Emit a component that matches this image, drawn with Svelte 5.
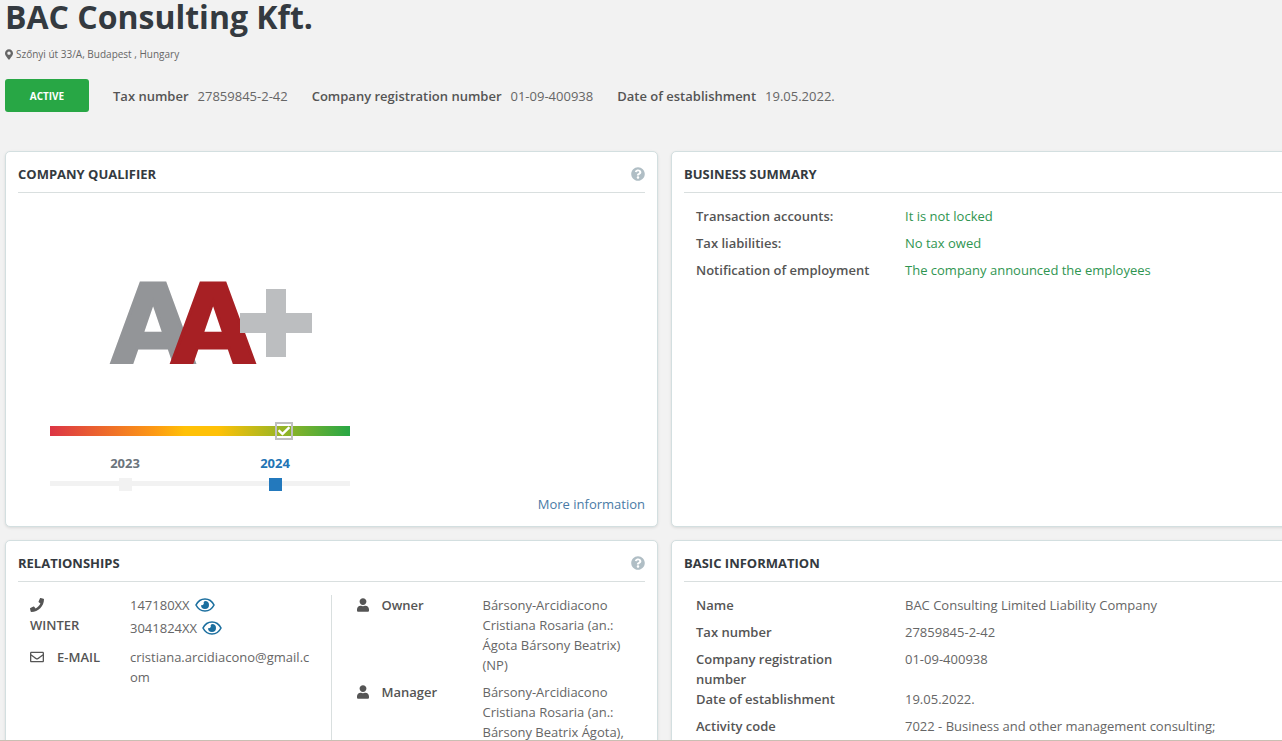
<script lang="ts">
	const company = {
		name: 'BAC Consulting Kft.',
		address: 'Szőnyi út 33/A, Budapest , Hungary',
		status: 'ACTIVE'
	};

	const facts = [
		{ label: 'Tax number', value: '27859845-2-42' },
		{ label: 'Company registration number', value: '01-09-400938' },
		{ label: 'Date of establishment', value: '19.05.2022.' }
	];

	const summary = [
		{ label: 'Transaction accounts:', value: 'It is not locked' },
		{ label: 'Tax liabilities:', value: 'No tax owed' },
		{ label: 'Notification of employment', value: 'The company announced the employees' }
	];

	const basics = [
		{ label: 'Name', value: 'BAC Consulting Limited Liability Company' },
		{ label: 'Tax number', value: '27859845-2-42' },
		{ label: 'Company registration number', value: '01-09-400938' },
		{ label: 'Date of establishment', value: '19.05.2022.' },
		{ label: 'Activity code', value: '7022 - Business and other management consulting;' }
	];

	const phones = ['147180XX', '3041824XX'];

	const people = [
		{ role: 'Owner', name: 'Bársony-Arcidiacono Cristiana Rosaria (an.: Ágota Bársony Beatrix) (NP)' },
		{ role: 'Manager', name: 'Bársony-Arcidiacono Cristiana Rosaria (an.: Bársony Beatrix Ágota),' }
	];

	const years = [2023, 2024];
	let activeYear = $state(2024);
	let score = 78;
</script>

{#snippet help()}
	<button class="help" aria-label="Help">
		<svg width="14" height="14" viewBox="0 0 512 512">
			<path
				fill="currentColor"
				d="M504 256c0 136.997-111.043 248-248 248S8 392.997 8 256C8 119.083 119.043 8 256 8s248 111.083 248 248zM262.655 90c-54.497 0-89.255 22.957-116.549 63.758-3.536 5.286-2.353 12.415 2.715 16.258l34.699 26.31c5.205 3.947 12.621 3.008 16.665-2.122 17.864-22.658 30.113-35.797 57.303-35.797 20.429 0 45.698 13.148 45.698 32.958 0 14.976-12.363 22.667-32.534 33.976C247.128 238.528 216 254.941 216 296v4c0 6.627 5.373 12 12 12h56c6.627 0 12-5.373 12-12v-1.333c0-28.462 83.186-29.647 83.186-106.667 0-58.002-60.165-102-116.531-102zM256 338c-25.365 0-46 20.635-46 46 0 25.364 20.635 46 46 46s46-20.636 46-46c0-25.365-20.635-46-46-46z"
			/>
		</svg>
	</button>
{/snippet}

<div class="page">
	<header>
		<h1>{company.name}</h1>
		<p class="address">
			<svg width="8" height="11" viewBox="0 0 384 512">
				<path
					fill="currentColor"
					d="M172.268 501.67C26.97 291.031 0 269.413 0 192 0 85.961 85.961 0 192 0s192 85.961 192 192c0 77.413-26.97 99.031-172.268 309.67-9.535 13.774-29.93 13.773-39.464 0zM192 272c44.183 0 80-35.817 80-80s-35.817-80-80-80-80 35.817-80 80 35.817 80 80 80z"
				/>
			</svg>
			{company.address}
		</p>
		<div class="facts">
			<button class="status">{company.status}</button>
			{#each facts as fact}
				<p class="fact"><strong>{fact.label}</strong><span>{fact.value}</span></p>
			{/each}
		</div>
	</header>

	<main>
		<section class="card qualifier">
			<div class="card-head">
				<h2>COMPANY QUALIFIER</h2>
				{@render help()}
			</div>
			<div class="rating">
				<svg class="grade" width="300" height="130" viewBox="0 -30 300 130" role="img" aria-label="AA+">
					<text class="grade-back" x="103" y="79" text-anchor="middle">A</text>
					<text class="grade-front" x="163" y="79" text-anchor="middle">A</text>
					<rect x="216" y="6" width="20" height="68" fill="#bcbec0" />
					<rect x="190" y="30" width="72" height="20" fill="#bcbec0" />
				</svg>
				<div class="scale">
					<span class="marker" style="left: {score}%">
						<svg width="12" height="12" viewBox="0 0 512 512">
							<path
								fill="#fff"
								d="M173.898 439.404l-166.4-166.4c-9.997-9.997-9.997-26.206 0-36.204l36.203-36.204c9.997-9.998 26.207-9.998 36.204 0L192 312.69 432.095 72.596c9.997-9.997 26.207-9.997 36.204 0l36.203 36.204c9.997 9.997 9.997 26.206 0 36.204l-294.4 294.401c-9.998 9.997-26.207 9.997-36.204-.001z"
							/>
						</svg>
					</span>
				</div>
				<div class="timeline">
					{#each years as year}
						<button class="year" class:active={year === activeYear} onclick={() => (activeYear = year)}>
							{year}
							<span class="dot"></span>
						</button>
					{/each}
				</div>
			</div>
			<a class="more" href="#more">More information</a>
		</section>

		<section class="card">
			<div class="card-head">
				<h2>BUSINESS SUMMARY</h2>
			</div>
			<dl class="rows good">
				{#each summary as row}
					<div class="row"><dt>{row.label}</dt><dd>{row.value}</dd></div>
				{/each}
			</dl>
		</section>

		<section class="card">
			<div class="card-head">
				<h2>RELATIONSHIPS</h2>
				{@render help()}
			</div>
			<div class="relations">
				<dl class="contacts">
					<div class="contact">
						<dt>
							<svg width="14" height="14" viewBox="0 0 512 512">
								<path
									fill="currentColor"
									d="M493.4 24.6l-104-24c-11.3-2.6-22.9 3.3-27.5 13.9l-48 112c-4.2 9.8-1.4 21.3 6.9 28l60.6 49.6c-36 76.7-98.9 140.5-177.2 177.2l-49.6-60.6c-6.8-8.3-18.2-11.1-28-6.9l-112 48C3.9 366.5-2 378.1.6 389.4l24 104C27.1 504.2 36.7 512 48 512c256.1 0 464-207.5 464-464 0-11.2-7.7-20.9-18.6-23.4z"
								/>
							</svg>
							<span>WINTER</span>
						</dt>
						<dd>
							{#each phones as phone}
								<span class="phone">
									{phone}
									<button class="reveal" aria-label="Show number">
										<svg width="20" height="14" viewBox="0 0 20 14">
											<path
												d="M1 7C5 -1 15 -1 19 7C15 15 5 15 1 7Z"
												fill="none"
												stroke="currentColor"
												stroke-width="1.6"
											/>
											<path d="M10 3a4 4 0 1 1-4 4c1.5.8 3.6-.6 2.6-2.4C9 3.8 9.4 3.2 10 3Z" fill="currentColor" />
										</svg>
									</button>
								</span>
							{/each}
						</dd>
					</div>
					<div class="contact">
						<dt>
							<svg width="14" height="14" viewBox="0 0 512 512">
								<path
									fill="currentColor"
									d="M464 64H48C21.49 64 0 85.49 0 112v288c0 26.51 21.49 48 48 48h416c26.51 0 48-21.49 48-48V112c0-26.51-21.49-48-48-48zm0 48v40.805c-22.422 18.259-58.168 46.651-134.587 106.49-16.841 13.247-50.201 45.072-73.413 44.701-23.208.375-56.579-31.459-73.413-44.701C106.18 199.465 70.425 171.067 48 152.805V112h416zM48 400V214.398c22.914 18.251 55.409 43.862 104.938 82.646 21.857 17.205 60.134 55.186 103.062 54.955 42.717.231 80.509-37.199 103.053-54.947 49.528-38.783 82.032-64.401 104.947-82.653V400H48z"
								/>
							</svg>
							<span>E-MAIL</span>
						</dt>
						<dd class="email">cristiana.arcidiacono@gmail.com</dd>
					</div>
				</dl>
				<dl class="people">
					{#each people as person}
						<div class="person">
							<dt>
								<svg width="12" height="14" viewBox="0 0 448 512">
									<path
										fill="currentColor"
										d="M224 256c70.7 0 128-57.3 128-128S294.7 0 224 0 96 57.3 96 128s57.3 128 128 128zm89.6 32h-16.7c-22.2 10.2-46.9 16-72.9 16s-50.6-5.8-72.9-16h-16.7C60.2 288 0 348.2 0 422.4V464c0 26.5 21.5 48 48 48h352c26.5 0 48-21.5 48-48v-41.6c0-74.2-60.2-134.4-134.4-134.4z"
									/>
								</svg>
								{person.role}
							</dt>
							<dd>{person.name}</dd>
						</div>
					{/each}
				</dl>
			</div>
		</section>

		<section class="card">
			<div class="card-head">
				<h2>BASIC INFORMATION</h2>
			</div>
			<dl class="rows">
				{#each basics as row}
					<div class="row"><dt>{row.label}</dt><dd>{row.value}</dd></div>
				{/each}
			</dl>
		</section>
	</main>
</div>

<style>
	:global(body) {
		background: #f2f2f2;
	}

	.page {
		box-sizing: border-box;
		height: 100vh;
		padding-left: 5px;
		overflow: hidden;
		border-bottom: 1px solid #c9bfb3;
		font-family: 'Open Sans', 'Noto Sans', sans-serif;
		font-size: 13px;
		line-height: 20px;
		color: #666;
	}
	h1,
	h2,
	p,
	dl,
	dd {
		margin: 0;
	}
	button {
		padding: 0;
		border: 0;
		background: none;
		font: inherit;
		color: inherit;
		cursor: pointer;
	}
	svg {
		display: block;
		flex-shrink: 0;
	}
	strong,
	dt {
		font-weight: 600;
		color: #555;
	}

	/* Company header */
	h1 {
		font-size: 32px;
		line-height: 34px;
		font-weight: 700;
		color: #343a40;
	}
	.address {
		display: flex;
		align-items: center;
		gap: 3px;
		margin-top: 10px;
		font-size: 10px;
	}
	.facts {
		display: flex;
		align-items: center;
		gap: 24px;
		margin-top: 15px;
	}
	.status {
		width: 84px;
		height: 33px;
		border-radius: 3px;
		background: #28a745;
		color: #fff;
		font-size: 10px;
		font-weight: 700;
	}
	.fact {
		display: flex;
		gap: 9px;
	}

	/* Cards */
	main {
		display: grid;
		grid-template-columns: 1fr 1fr;
		gap: 13px;
		margin: 39px -42px 0 0;
	}
	.card {
		box-sizing: border-box;
		padding: 12px;
		border: 1px solid #d3dfe0;
		border-radius: 5px;
		background: #fff;
		box-shadow: 0 1px 3px rgba(0, 0, 0, 0.1);
	}
	.card-head {
		display: flex;
		justify-content: space-between;
		align-items: center;
		padding-bottom: 8px;
		border-bottom: 1px solid #d9dfdf;
	}
	h2 {
		font-size: 13px;
		line-height: 20px;
		font-weight: 700;
		color: #343a40;
	}
	.help {
		color: #b0bec5;
	}

	/* Qualifier */
	.qualifier {
		display: flex;
		flex-direction: column;
	}
	.rating {
		width: 300px;
		padding: 60px 0 0 32px;
	}
	.grade text {
		font-family: 'DejaVu Sans', sans-serif;
		font-size: 108px;
		font-weight: 700;
		stroke-width: 3px;
	}
	.grade-back {
		fill: #939598;
		stroke: #939598;
	}
	.grade-front {
		fill: #a72024;
		stroke: #a72024;
	}
	.scale {
		position: relative;
		height: 10px;
		margin-top: 43px;
		background: linear-gradient(to right, #dc3545, #fd9a14 35%, #ffc107 45%, #ffc107 56%, #28a745);
	}
	.marker {
		position: absolute;
		top: 50%;
		display: flex;
		padding: 1px;
		border: 2px solid #bfbfbf;
		transform: translate(-50%, -50%);
	}
	.timeline {
		display: flex;
		margin-top: 17px;
		background: linear-gradient(#f2f2f2, #f2f2f2) 0 28px / 100% 5px no-repeat;
	}
	.year {
		display: flex;
		flex: 1;
		flex-direction: column;
		align-items: center;
		gap: 5px;
		font-weight: 700;
		color: #6c757d;
	}
	.year.active {
		color: #2375b5;
	}
	.dot {
		width: 13px;
		height: 13px;
		background: #f2f2f2;
	}
	.active .dot {
		background: #2379bd;
	}
	.more {
		align-self: flex-end;
		margin-top: 3px;
		color: #4a7ba6;
		text-decoration: none;
	}

	/* Label and value lists */
	.rows {
		padding: 13px 12px 0;
	}
	.row {
		display: grid;
		grid-template-columns: 209px 1fr;
		min-height: 27px;
	}
	.row dt {
		padding-right: 25px;
	}
	.good dd {
		color: #2f9551;
	}

	/* Relationships */
	.relations {
		display: grid;
		grid-template-columns: 1fr 1fr;
		padding-top: 13px;
	}
	.contacts {
		padding: 0 20px 0 12px;
		border-right: 1px solid #d9dfdf;
	}
	.contact {
		display: grid;
		grid-template-columns: 100px 1fr;
		margin-bottom: 6px;
	}
	.contact dt {
		display: flex;
		flex-wrap: wrap;
		align-content: flex-start;
		align-items: center;
		column-gap: 13px;
		padding-right: 25px;
	}
	.contact dt svg {
		padding: 3px 0;
	}
	.phone {
		display: flex;
		align-items: center;
		gap: 5px;
		margin-bottom: 3px;
	}
	.reveal {
		color: #1c6f9f;
	}
	.email {
		word-break: break-all;
	}
	.people {
		padding: 0 12px 0 25px;
	}
	.person {
		display: grid;
		grid-template-columns: 126px 1fr;
		margin-bottom: 7px;
	}
	.person dt {
		display: flex;
		gap: 13px;
	}
	.person dt svg {
		padding: 3px 0;
	}
</style>
